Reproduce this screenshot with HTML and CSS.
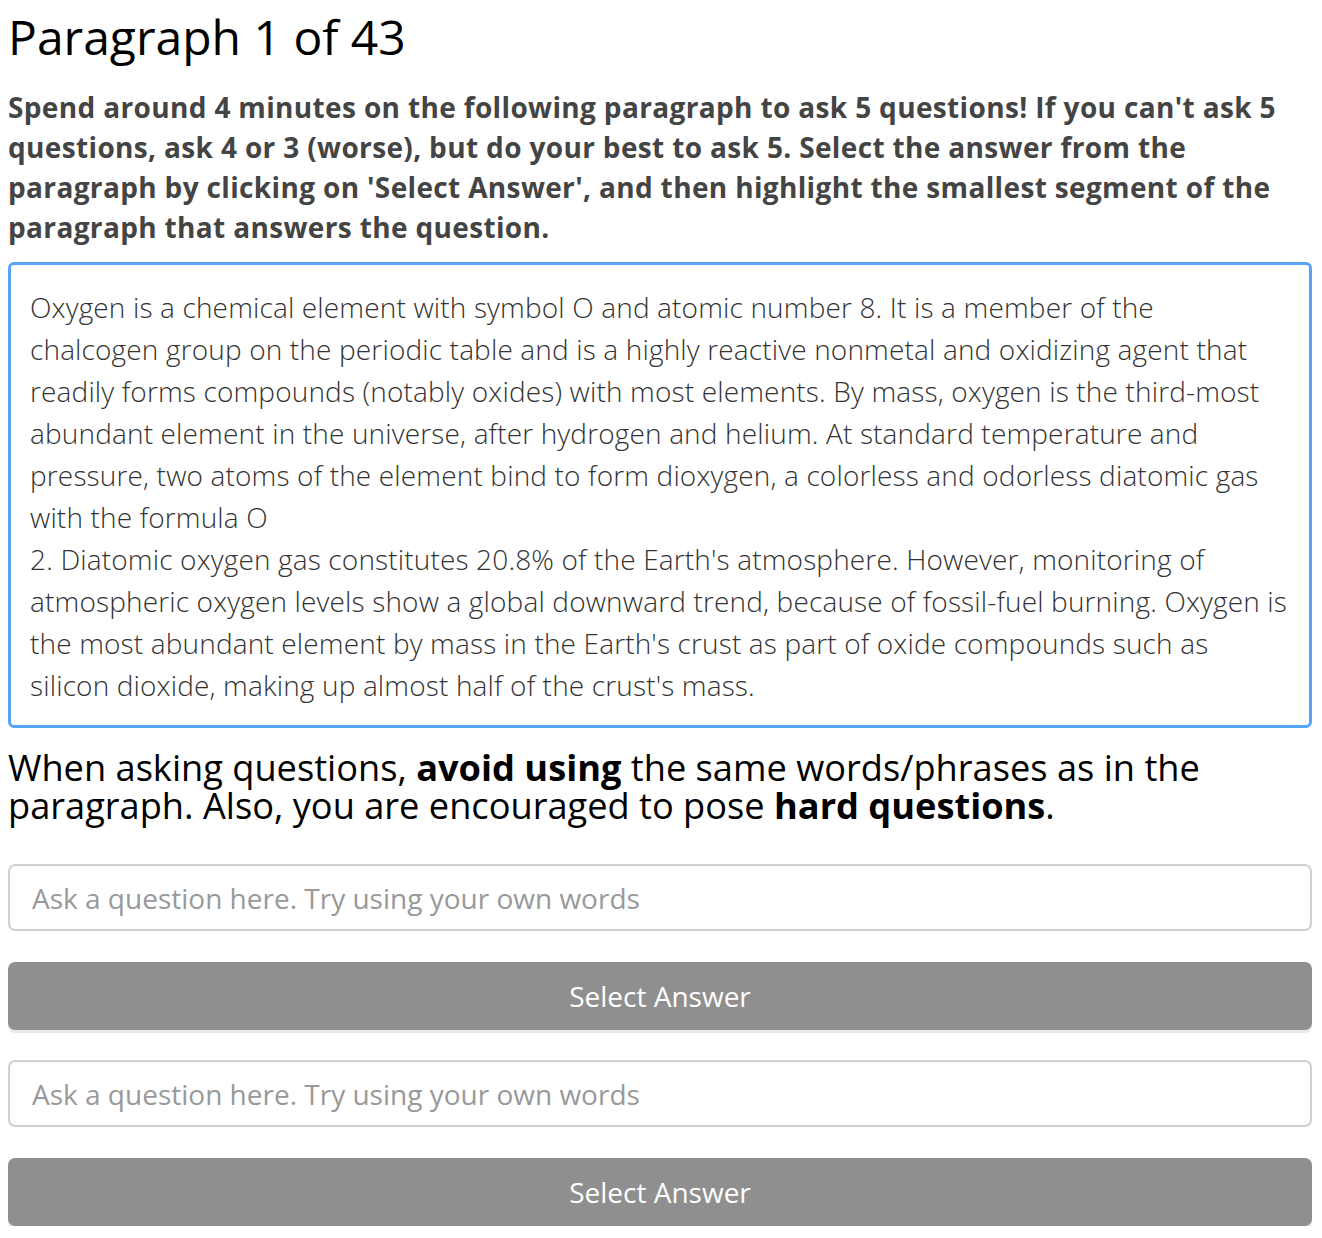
FILE: index.html
```html
<!DOCTYPE html>
<html>
<head>
<meta charset="utf-8">
<link rel="stylesheet" href="styles.css">
</head>
<body>
<h1 class="title">Paragraph 1 of 43</h1>
<p class="instructions">Spend around 4 minutes on the following paragraph to ask 5 questions! If you can't ask 5 questions, ask 4 or 3 (worse), but do your best to ask 5. Select the answer from the paragraph by clicking on 'Select Answer', and then highlight the smallest segment of the paragraph that answers the question.</p>
<div class="passage">Oxygen is a chemical element with symbol O and atomic number 8. It is a member of the chalcogen group on the periodic table and is a highly reactive nonmetal and oxidizing agent that readily forms compounds (notably oxides) with most elements. By mass, oxygen is the third-most abundant element in the universe, after hydrogen and helium. At standard temperature and pressure, two atoms of the element bind to form dioxygen, a colorless and odorless diatomic gas with the formula O<br>2. Diatomic oxygen gas constitutes 20.8% of the Earth's atmosphere. However, monitoring of atmospheric oxygen levels show a global downward trend, because of fossil-fuel burning. Oxygen is the most abundant element by mass in the Earth's crust as part of oxide compounds such as silicon dioxide, making up almost half of the crust's mass.</div>
<p class="advice">When asking questions, <b>avoid using</b> the same words/phrases as in the paragraph. Also, you are encouraged to pose <b>hard questions</b>.</p>
<div class="qa-list">
  <div class="qa">
    <input class="question" type="text" placeholder="Ask a question here. Try using your own words">
    <button class="select-btn">Select Answer</button>
  </div>
  <div class="qa">
    <input class="question" type="text" placeholder="Ask a question here. Try using your own words">
    <button class="select-btn">Select Answer</button>
  </div>
</div>
</body>
</html>
```

FILE: styles.css
```css
html, body {
  background: #ffffff;
}
body {
  margin: 8px 10px 8px 8px;
  font-family: "Open Sans", "Liberation Sans", sans-serif;
  color: #000;
}
.title {
  margin: 0;
  font-size: 48px;
  font-weight: 400;
  line-height: 58px;
  color: #000;
}
.instructions {
  margin: 21px 0 0;
  font-size: 28px;
  font-weight: 700;
  letter-spacing: 0.35px;
  line-height: 40px;
  color: #444;
}
.passage {
  margin-top: 15px;
  border: 3px solid #55a6fa;
  border-radius: 6px;
  padding: 21px 20px 19px 19px;
  font-size: 28px;
  font-weight: 300;
  letter-spacing: 0.15px;
  line-height: 42px;
  color: #333;
}
.advice {
  margin: 20px 0 0;
  font-size: 36.2px;
  font-weight: 400;
  line-height: 38px;
  color: #000;
}
.advice b {
  font-weight: 700;
}
.qa-list {
  margin-top: 40px;
  display: flex;
  flex-direction: column;
  gap: 30px;
}
.qa {
  display: flex;
  flex-direction: column;
  gap: 31px;
}
.question {
  box-sizing: border-box;
  width: 100%;
  height: 67px;
  margin: 0;
  border: 2px solid #d0d0d0;
  border-radius: 7px;
  padding: 0 22px;
  font-family: "Open Sans", "Liberation Sans", sans-serif;
  font-size: 28px;
  color: #333;
  background: #fff;
  box-shadow: inset 0 1px 2px rgba(0,0,0,0.05);
  outline: none;
}
.question::placeholder {
  color: #999;
}
.select-btn {
  box-sizing: border-box;
  width: 100%;
  height: 68px;
  margin: 0;
  border: none;
  border-radius: 7px;
  background: #8f8f8f;
  color: #fff;
  font-family: "Open Sans", "Liberation Sans", sans-serif;
  font-size: 28px;
  font-weight: 400;
  box-shadow: 0 3px 0 #e8e8e8;
  cursor: pointer;
}
```
